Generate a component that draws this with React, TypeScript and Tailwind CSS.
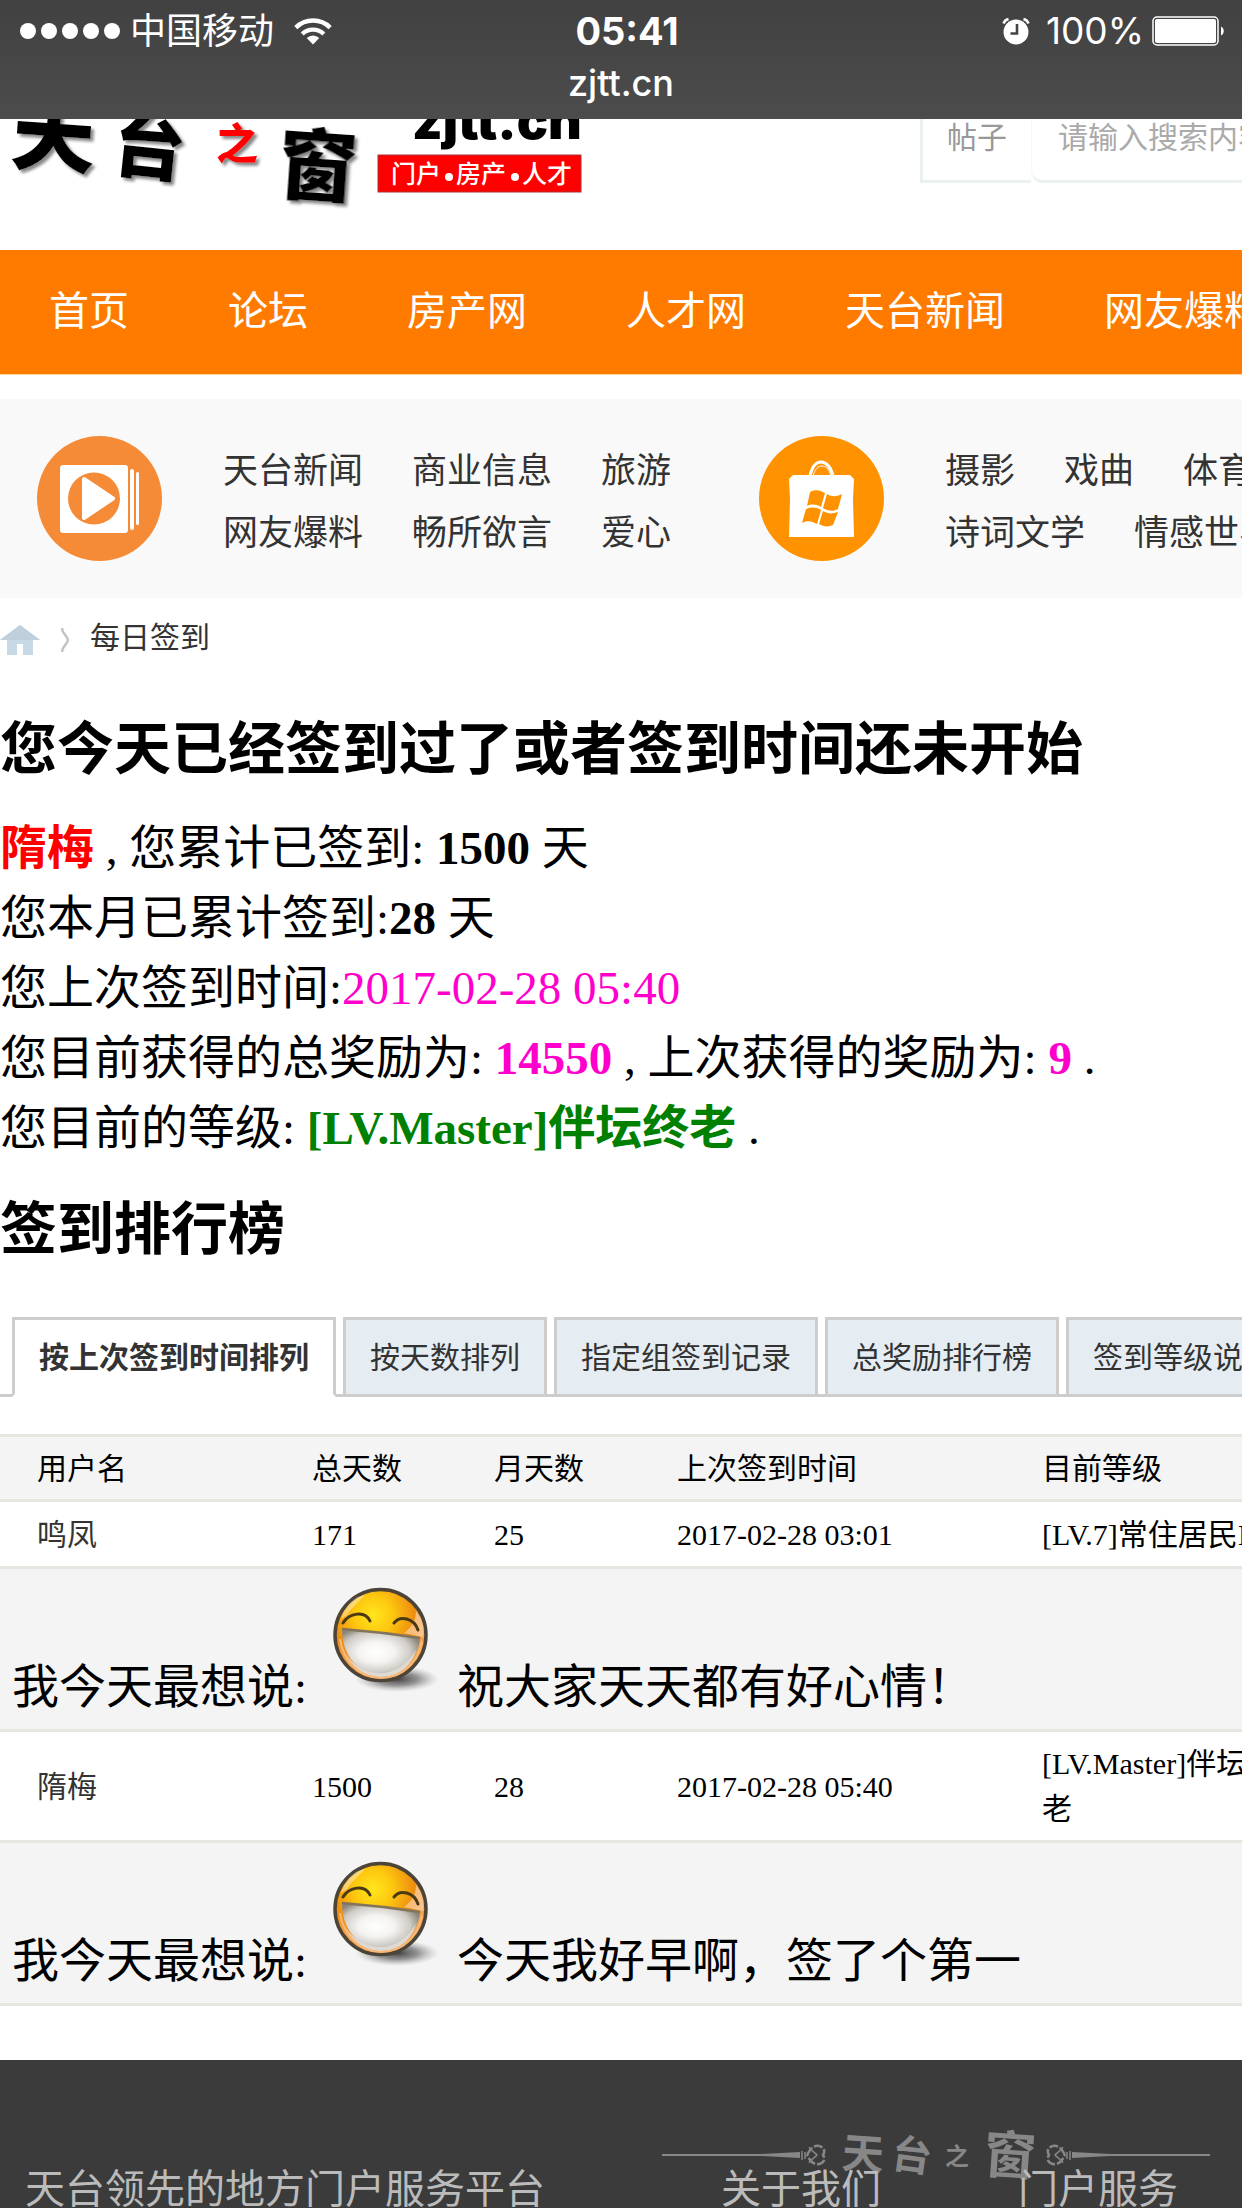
import React from "react";

const cjk = "font-['Liberation_Serif','Noto_Sans_CJK_SC',serif]";
const sans = "font-['Inter','Noto_Sans_CJK_SC',sans-serif]";

function StatusBar() {
  return (
    <div className={`relative h-[119px] w-full bg-linear-to-b from-[#414141] to-[#4c4c4c] text-white ${sans}`}>
      <div className="grid grid-cols-[1fr_auto_1fr] items-center px-5 pt-2">
        <div className="flex h-11 items-center">
          <svg viewBox="0 0 102 18" className="h-[18px] w-[102px]" fill="currentColor" aria-label="信号">
            {[8, 29, 50, 71, 92].map((cx) => (
              <circle key={cx} cx={cx} cy="9" r="8" />
            ))}
          </svg>
          <span className="ml-2 text-[36px] leading-[48px]">中国移动</span>
          <svg viewBox="0 0 38 28" className="ml-5 h-7 w-[38px]" fill="none" stroke="currentColor" strokeWidth="4.4" aria-label="Wi-Fi">
            <path d="M1.8 10.6a24.5 24.5 0 0 1 34.4 0" />
            <path d="M8.2 17a15.5 15.5 0 0 1 21.6 0" />
            <path d="M19 27.5l-6.3-6.4a9 9 0 0 1 12.6 0z" fill="currentColor" stroke="none" />
          </svg>
        </div>
        <div className="pl-3 text-[38px] leading-[46px] font-bold">05:41</div>
        <div className="-mr-1 flex h-11 items-center justify-end">
          <svg viewBox="0 0 28 28" className="h-7 w-7" aria-label="闹钟">
            <circle cx="14" cy="15" r="12.5" fill="currentColor" />
            <path d="M15 7v9.500H8.500" fill="none" stroke="#444" strokeWidth="2.600" />
            <path d="M1.500 6.500a7 7 0 0 1 5-4.500M26.500 6.500a7 7 0 0 0-5-4.500" fill="none" stroke="currentColor" strokeWidth="2.600" />
          </svg>
          <span className="ml-4 text-[37px] leading-[46px]">100%</span>
          <svg viewBox="0 0 74 30" className="ml-2 h-[30px] w-[74px]" aria-label="电量">
            <rect x="1" y="1" width="65" height="28" rx="4" fill="none" stroke="currentColor" strokeWidth="1.500" />
            <rect x="3" y="3" width="61" height="24" rx="2" fill="currentColor" />
            <path d="M69 10.500a5 5 0 0 1 0 9z" fill="currentColor" />
          </svg>
        </div>
      </div>
      <div className="text-center text-[36px] leading-[58px] font-medium">zjtt.cn</div>
    </div>
  );
}

function SiteLogo() {
  return (
    <svg viewBox="0 0 600 131" className="h-[131px] w-[600px] shrink-0" role="img" aria-label="天台之窗">
      <defs>
        <filter id="logoShadow" x="-10%" y="-10%" width="130%" height="130%">
          <feDropShadow dx="3" dy="3" stdDeviation="1.500" floodColor="#888" />
        </filter>
      </defs>
      <g filter="url(#logoShadow)" fontFamily="Noto Sans CJK SC, sans-serif" fontWeight="900" fill="#000">
        <text x="10" y="46" fontSize="84" transform="rotate(4 50 40)">天</text>
        <text x="112" y="54" fontSize="72" transform="rotate(6 145 40)">台</text>
        <text x="216" y="40" fontSize="42" fill="#f00">之</text>
        <text x="278" y="76" fontSize="78" transform="rotate(4 320 60)">窗</text>
      </g>
      <text x="412" y="20" fontFamily="Inter, sans-serif" fontWeight="900" fontSize="52">zjtt.cn</text>
      <rect x="378" y="36" width="203" height="37" fill="#f00" stroke="#a33" strokeWidth="1" />
      <g fontFamily="Noto Sans CJK SC, sans-serif" fontWeight="500" fontSize="25" fill="#fff">
        <text x="391" y="64">门户</text>
        <text x="456" y="64">房产</text>
        <text x="522" y="64">人才</text>
      </g>
      <circle cx="449" cy="58" r="4" fill="#fff" />
      <circle cx="515" cy="58" r="4" fill="#fff" />
    </svg>
  );
}

function Header() {
  return (
    <header className="flex h-[131px] w-full items-start justify-between overflow-hidden">
      <SiteLogo />
      <form className={`flex h-16 w-[322px] shrink-0 text-[30px] ${cjk}`} onSubmit={(e) => e.preventDefault()}>
        <button type="button" className="h-16 w-[111px] shrink-0 border-b-[3px] border-l-[3px] border-[#ebf1f1] pb-6 leading-[37px] text-[#999]">
          帖子
        </button>
        <input
          type="search"
          aria-label="搜索"
          placeholder="请输入搜索内容"
          className="h-16 w-[400px] shrink-0 rounded-bl-xl border-b-[3px] border-l border-b-[#ebf1f1] border-l-[#f6f9f9] pb-6 pl-[26px] text-[#333] outline-none placeholder:text-[#aaa]"
        />
      </form>
    </header>
  );
}

const navItems = ["首页", "论坛", "房产网", "人才网", "天台新闻", "网友爆料"];

function MainNav() {
  return (
    <nav className={`flex h-[125px] items-center gap-[99px] overflow-hidden border-b border-[#ffd0a0] bg-[#ff7b00] pl-[49px] text-[40px] whitespace-nowrap text-white ${cjk}`}>
      {navItems.map((item) => (
        <a key={item} href="#" className="shrink-0 leading-[60px]">
          {item}
        </a>
      ))}
    </nav>
  );
}

function VideoIcon() {
  return (
    <svg viewBox="0 0 125 125" className="h-[125px] w-[125px] shrink-0" aria-hidden="true">
      <circle cx="62.500" cy="62.500" r="62.500" fill="#f68b37" />
      <rect x="23" y="29" width="68" height="68" rx="3" fill="#fff" />
      <rect x="93" y="33" width="4" height="61" rx="2" fill="#fff" />
      <rect x="99" y="36" width="3" height="53" rx="1.500" fill="#fff" />
      <circle cx="57" cy="62.500" r="26" fill="#f68b37" />
      <path d="M47 43 76 62.500 47 82z" fill="#fff" stroke="#fff" strokeWidth="4" strokeLinejoin="round" />
    </svg>
  );
}

function StoreIcon() {
  return (
    <svg viewBox="0 0 125 125" className="h-[125px] w-[125px] shrink-0" aria-hidden="true">
      <circle cx="62.500" cy="62.500" r="62.500" fill="#ff9200" />
      <path d="M51 40c2-9 6-14 11-14s10 5 12 14" fill="none" stroke="#fff" strokeWidth="3" />
      <path d="M54 40c2-7 5-10 9-10s7 3 9 10" fill="none" stroke="#fff" strokeWidth="1" />
      <path d="M30 43l4-4h57l4 4-1 20 1 38H30l1-38z" fill="#fff" />
      <g fill="#ff9200">
        <path d="M51 56c5-3 10-2 15 1l-4 14c-5-3-10-3-14-1z" />
        <path d="M68 58c5 3 9 3 15 0l-4 15c-5 3-10 2-15-1z" />
        <path d="M47 73c5-2 10-2 15 1l-4 14c-5-3-10-4-15-1z" />
        <path d="M64 75c5 3 9 3 15 1l-5 13c-5 2-9 2-14-1z" />
      </g>
    </svg>
  );
}

function LinkGroup({ icon, rows }: { icon: React.ReactNode; rows: string[][] }) {
  return (
    <div className="flex shrink-0 items-center gap-[61px]">
      {icon}
      <div className="pt-2">
        {rows.map((row) => (
          <div key={row[0]} className="flex gap-[49px] leading-[62px]">
            {row.map((t) => (
              <a key={t} href="#">
                {t}
              </a>
            ))}
          </div>
        ))}
      </div>
    </div>
  );
}

function Categories() {
  return (
    <section className={`mt-6 flex h-[199px] items-center gap-[88px] overflow-hidden bg-[#f9f9f9] pl-[37px] text-[35px] whitespace-nowrap text-[#333] ${cjk}`}>
      <LinkGroup
        icon={<VideoIcon />}
        rows={[
          ["天台新闻", "商业信息", "旅游"],
          ["网友爆料", "畅所欲言", "爱心"],
        ]}
      />
      <LinkGroup
        icon={<StoreIcon />}
        rows={[
          ["摄影", "戏曲", "体育"],
          ["诗词文学", "情感世界"],
        ]}
      />
    </section>
  );
}

function Breadcrumb() {
  return (
    <div className="flex h-20 items-center text-[30px] text-[#333]">
      <a href="#" aria-label="首页" className="mt-1">
        <svg viewBox="0 0 40 32" className="h-8 w-10" aria-hidden="true">
          <path d="M20 1 0 16h7v15h10V20h6v11h10V16h7z" fill="#c6d9e5" />
          <path d="M20 1 0 16h40z" fill="#bfd0dc" />
        </svg>
      </a>
      <svg viewBox="0 0 10 26" className="mt-1 ml-5 h-[26px] w-[10px]" aria-hidden="true">
        <path d="M2 1c0 6 5 7 6 12-1 5-6 6-6 12" fill="none" stroke="#c4c4c4" strokeWidth="2.500" />
      </svg>
      <a href="#" className="ml-5 leading-[44px]">每日签到</a>
    </div>
  );
}

function Summary() {
  return (
    <section className="text-[47px] leading-[70px] text-black">
      <h1 className="mt-8 text-[57px] leading-[80px] font-bold">您今天已经签到过了或者签到时间还未开始</h1>
      <div className="mt-[23px]">
        <p><b className="text-[#f00]">隋梅</b> , 您累计已签到: <b>1500</b> 天</p>
        <p>您本月已累计签到:<b>28</b> 天</p>
        <p>您上次签到时间:<span className="text-[#f0c]">2017-02-28 05:40</span></p>
        <p>您目前获得的总奖励为: <b className="text-[#f0c]">14550</b> , 上次获得的奖励为: <b className="text-[#f0c]">9</b> .</p>
        <p>您目前的等级: <b className="text-[#008000]">[LV.Master]伴坛终老</b> .</p>
      </div>
      <h2 className="mt-[27px] text-[57px] leading-[80px] font-bold">签到排行榜</h2>
    </section>
  );
}

const tabs = ["按上次签到时间排列", "按天数排列", "指定组签到记录", "总奖励排行榜", "签到等级说明"];

function Tabs() {
  return (
    <div className="mt-[47px] overflow-hidden">
      <div role="tablist" className="flex gap-[7px] border-b-[3px] border-[#cdcdcd] pl-3 text-[30px] whitespace-nowrap text-[#333]">
        {tabs.map((t, i) => (
          <button
            key={t}
            role="tab"
            aria-selected={i === 0}
            className={
              i === 0
                ? "-mb-[3px] h-20 shrink-0 border-[3px] border-[#cdcdcd] border-b-white bg-white px-6 font-bold"
                : "-mb-[3px] h-20 shrink-0 border-[3px] border-[#cdcdcd] bg-[#e5edf3] px-6"
            }
          >
            {t}
          </button>
        ))}
      </div>
    </div>
  );
}

function Grin({ id }: { id: string }) {
  return (
    <svg viewBox="0 0 126 126" className="h-[126px] w-[126px] shrink-0" role="img" aria-label="开心">
      <defs>
        <radialGradient id={`${id}f`} cx="0.42" cy="0.28" r="0.6">
          <stop offset="0" stopColor="#ffe61e" />
          <stop offset="0.35" stopColor="#fdc80f" />
          <stop offset="0.75" stopColor="#ee8d10" />
          <stop offset="1" stopColor="#f3a24c" />
        </radialGradient>
        <radialGradient id={`${id}t`} cx="0.44" cy="0.5" r="0.58">
          <stop offset="0" stopColor="#fff" />
          <stop offset="0.4" stopColor="#f4f3f1" />
          <stop offset="0.75" stopColor="#cfccc6" />
          <stop offset="1" stopColor="#8b8679" />
        </radialGradient>
        <radialGradient id={`${id}s`}>
          <stop offset="0" stopColor="#000" stopOpacity="0.75" />
          <stop offset="0.5" stopColor="#333" stopOpacity="0.5" />
          <stop offset="1" stopColor="#888" stopOpacity="0" />
        </radialGradient>
      </defs>
      <ellipse cx="78" cy="102" rx="42" ry="13" fill={`url(#${id}s)`} />
      <circle cx="61.500" cy="58" r="45.500" fill={`url(#${id}f)`} stroke="#4c4438" strokeWidth="3.500" />
      <path d="M22 42C28 25 38 19 46 18c-6 7-14 13-18 20z" fill="#fff" opacity="0.4" />
      <path d="M97 34c7 9 9 17 7 26l-19-4c8-6 12-13 12-22z" fill="#ffdcc0" opacity="0.6" />
      <path d="M23 52c26 2 52 5 78 9-1 18-18 37-39 37S23 80 23 52z" fill={`url(#${id}t)`} />
      <path d="M26 76c8 13 21 20 35 20s27-8 36-23c-4 16-18 27-35 27-16 0-30-9-36-24z" fill="#dedad3" />
      <path d="M21 62c3 22 20 39 41 39s37-15 41-37" fill="none" stroke="#f8b878" strokeWidth="2" />
      <path d="M23 52c26 2 52 5 78 9" fill="none" stroke="#82735a" strokeWidth="2.500" />
      <path d="M24 46c6-10 22-13 27-2" fill="none" stroke="#4a3a14" strokeWidth="3" strokeLinecap="round" />
      <path d="M75 46c6-8 20-5 24 7" fill="none" stroke="#4a3a14" strokeWidth="3" strokeLinecap="round" />
    </svg>
  );
}

const records = [
  { id: "a", name: "鸣凤", total: "171", month: "25", last: "2017-02-28 03:01", level: "[LV.7]常住居民III", say: "祝大家天天都有好心情！", height: "h-[67px] border-b-[3px] border-[#e6e7e1]" },
  { id: "b", name: "隋梅", total: "1500", month: "28", last: "2017-02-28 05:40", level: "[LV.Master]伴坛终老", say: "今天我好早啊，签了个第一", height: "h-[111px] border-b-[3px] border-[#e6e7e1]" },
];

function Ranking() {
  return (
    <div className="mt-[37px] overflow-hidden">
      <table className="w-[1293px] table-fixed border-separate border-spacing-0 text-left text-[30px] leading-[45px] text-black">
        <colgroup>
          <col className="w-[312px]" />
          <col className="w-[182px]" />
          <col className="w-[183px]" />
          <col className="w-[365px]" />
          <col />
        </colgroup>
        <thead>
          <tr className="bg-[#f4f4f4] [&>th]:h-[68px] [&>th]:border-y-[3px] [&>th]:border-[#e6e7e1] [&>th]:p-0 [&>th]:font-normal">
            <th><span className="pl-[37px]">用户名</span></th>
            <th>总天数</th>
            <th>月天数</th>
            <th>上次签到时间</th>
            <th>目前等级</th>
          </tr>
        </thead>
        <tbody>
          {records.map((r) => (
            <React.Fragment key={r.id}>
              <tr className="[&>td]:p-0">
                <td className={r.height}>
                  <a href="#" className="pl-[37px] text-[#333]">{r.name}</a>
                </td>
                <td className={r.height}>{r.total}</td>
                <td className={r.height}>{r.month}</td>
                <td className={r.height}>{r.last}</td>
                <td className={r.height}>{r.level}</td>
              </tr>
              <tr>
                <td colSpan={5} className="h-[163px] border-b-[3px] border-[#e6e7e1] bg-[#f4f4f4] p-0 pl-3 align-top text-[47px] leading-[60px]">
                  <div className="flex items-baseline gap-3 pt-2">
                    <span>我今天最想说:</span>
                    <Grin id={r.id} />
                    <span>{r.say}</span>
                  </div>
                </td>
              </tr>
            </React.Fragment>
          ))}
        </tbody>
      </table>
    </div>
  );
}

function Flourish({ flip }: { flip?: boolean }) {
  return (
    <g transform={flip ? "translate(548 0) scale(-1 1)" : undefined} stroke="#878787" fill="none" strokeWidth="1.500">
      <path d="M0 34h100l38-2v6l-38-2H0z" fill="#878787" stroke="none" />
      <path d="M140 31v9M143 32v7" strokeWidth="1.500" />
      <path d="M145 35c4-8 8-10 12-9s7 4 4 9c3 5 0 8-4 9s-8-1-12-9" strokeWidth="2.500" strokeDasharray="9 2" />
      <path d="M147 27c2 4 6 5 8 8-2 3-6 4-8 8" strokeWidth="1.500" />
    </g>
  );
}

function Footer() {
  return (
    <footer className="relative flex-1 overflow-hidden bg-[#3b3b3b] pt-28">
      <svg viewBox="0 0 548 70" className="absolute top-[60px] left-[662px] h-[70px] w-[548px]" role="img" aria-label="天台之窗">
        <Flourish />
        <Flourish flip />
        <g fontFamily="Noto Sans CJK SC, sans-serif" fontWeight="700" fill="#878787">
          <text x="180" y="49" fontSize="42" transform="rotate(4 200 35)">天</text>
          <text x="230" y="50" fontSize="40" transform="rotate(8 250 35)">台</text>
          <text x="283" y="45" fontSize="24">之</text>
          <text x="322" y="54" fontSize="52" transform="rotate(4 346 35)">窗</text>
        </g>
      </svg>
      <div className="relative flex pl-[25px] text-[40px] leading-9 whitespace-nowrap text-[#bbb]">
        <span className="w-[696px] shrink-0">天台领先的地方门户服务平台</span>
        <a href="#" className="w-[297px] shrink-0">关于我们</a>
        <a href="#" className="shrink-0">门户服务</a>
      </div>
    </footer>
  );
}

export default function App() {
  return (
    <div lang="zh-CN" className={`flex min-h-screen w-full flex-col overflow-hidden bg-white ${cjk}`}>
      <StatusBar />
      <Header />
      <MainNav />
      <Categories />
      <Breadcrumb />
      <Summary />
      <Tabs />
      <Ranking />
      <div className="h-[54px]" />
      <Footer />
    </div>
  );
}
